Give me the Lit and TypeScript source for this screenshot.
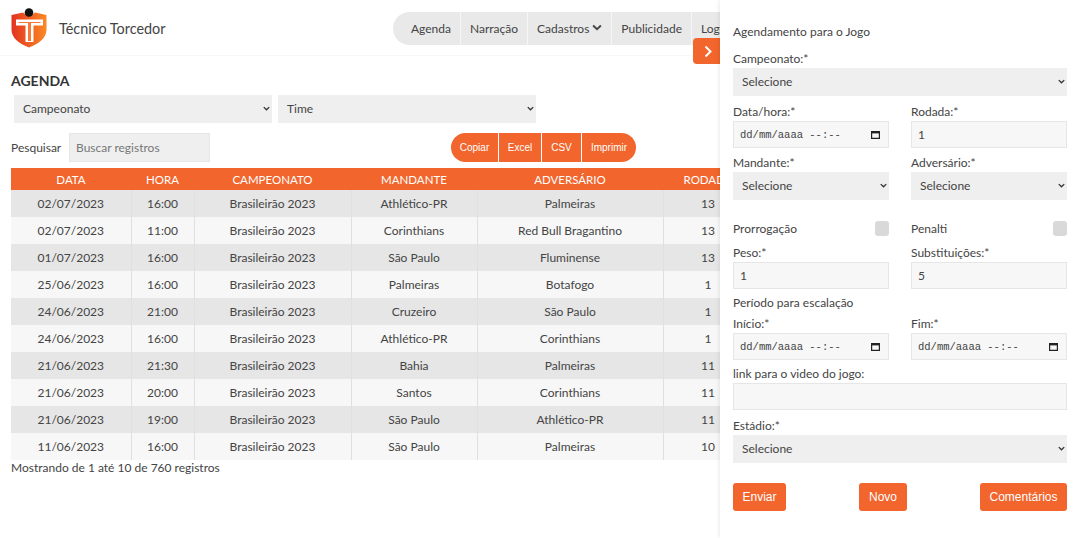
import { LitElement, css, html, svg } from 'lit';
import { customElement } from 'lit/decorators.js';

const ROWS = [
  ['02/07/2023', '16:00', 'Brasileirão 2023', 'Athlético-PR', 'Palmeiras', '13'],
  ['02/07/2023', '11:00', 'Brasileirão 2023', 'Corinthians', 'Red Bull Bragantino', '13'],
  ['01/07/2023', '16:00', 'Brasileirão 2023', 'São Paulo', 'Fluminense', '13'],
  ['25/06/2023', '16:00', 'Brasileirão 2023', 'Palmeiras', 'Botafogo', '1'],
  ['24/06/2023', '21:00', 'Brasileirão 2023', 'Cruzeiro', 'São Paulo', '1'],
  ['24/06/2023', '16:00', 'Brasileirão 2023', 'Athlético-PR', 'Corinthians', '1'],
  ['21/06/2023', '21:30', 'Brasileirão 2023', 'Bahia', 'Palmeiras', '11'],
  ['21/06/2023', '20:00', 'Brasileirão 2023', 'Santos', 'Corinthians', '11'],
  ['21/06/2023', '19:00', 'Brasileirão 2023', 'São Paulo', 'Athlético-PR', '11'],
  ['11/06/2023', '16:00', 'Brasileirão 2023', 'São Paulo', 'Palmeiras', '10'],
];

const chevron = svg`<path d="M1 1.2 4.5 4.6 8 1.2" fill="none" stroke="currentColor" stroke-width="1.7"/>`;

@customElement('app-root')
export class AppRoot extends LitElement {
  static styles = css`
    :host {
      display: block;
      position: relative;
      height: 538px;
      overflow: hidden;
      background: #fff;
      color: #444;
      font-family: Lato, sans-serif;
      font-size: 12px;
    }
    .header {
      display: flex;
      align-items: center;
      height: 56px;
      box-sizing: border-box;
      border-bottom: 1px solid #f7f7f7;
      padding: 0 360px 0 11px;
    }
    .logo { width: 36px; height: 48px; flex: none; align-self: flex-start; }
    .brand { margin: 2px 0 0 12px; font-size: 14.4px; color: #444; }
    .nav {
      display: flex;
      align-items: center;
      flex: none;
      width: 327px;
      margin: 1px 0 0 auto;
      height: 33px;
      padding-left: 9px;
      box-sizing: border-box;
      background: #e9e9e9;
      border-radius: 17px 0 0 17px;
      white-space: nowrap;
    }
    .nav span {
      display: flex;
      align-items: center;
      gap: 3px;
      height: 100%;
      padding: 0 9px;
      border-right: 1px solid #f6f6f6;
    }
    .nav span:last-child { border-right: 0; padding-right: 30px; }
    .nav svg { width: 10px; height: 7px; margin-top: -2px; }
    .content { padding: 16px 0 0 11px; }
    h1 { margin: 0; font-size: 14px; line-height: 18px; font-weight: 700; color: #333; }
    .filters { display: flex; gap: 6px; margin: 5px 0 0 3px; }
    .filters .select { width: 258px; }
    .select {
      position: relative;
      display: flex;
      align-items: center;
      height: 28px;
      box-sizing: border-box;
      padding: 0 0 2px 9px;
      background: #efefef;
      color: #444;
    }
    .select svg { position: absolute; right: 2px; top: 11px; width: 7px; height: 5px; color: #333; }
    .tools { display: flex; align-items: center; margin-top: 10px; height: 29px; }
    .tools > span { width: 51px; }
    .search {
      display: flex;
      align-items: center;
      width: 141px;
      height: 29px;
      box-sizing: border-box;
      margin-left: 7px;
      padding-left: 6px;
      background: #efefef;
      border: 1px solid #e6e6e6;
      color: #777;
    }
    .export { display: flex; height: 29px; margin-left: 241px; }
    .export span {
      display: flex;
      align-items: center;
      justify-content: center;
      background: #f2652c;
      color: #fff;
      font: 10px 'Liberation Sans', sans-serif;
      border-right: 1px solid #fff;
      box-sizing: border-box;
    }
    .export span:first-child { width: 48px; border-radius: 15px 0 0 15px; }
    .export span:nth-child(2) { width: 43px; }
    .export span:nth-child(3) { width: 40px; }
    .export span:last-child { width: 54px; border-right: 0; border-radius: 0 15px 15px 0; }
    table {
      table-layout: fixed;
      width: 742px;
      margin-top: 6px;
      border-collapse: collapse;
      text-align: center;
    }
    th {
      height: 22px;
      padding: 0;
      background: #f2652c;
      color: #fff;
      font-weight: 400;
      font-size: 11.5px;
    }
    td {
      height: 27px;
      padding: 0;
      border-right: 1px solid #e0e0e0;
      background: #f7f7f7;
    }
    tr:nth-child(odd) td { background: #e6e6e6; }
    .count { line-height: 15px; }
    .toggle {
      position: absolute;
      left: 693px;
      top: 38px;
      width: 30px;
      height: 26px;
      display: flex;
      align-items: center;
      padding-left: 11px;
      box-sizing: border-box;
      background: #f2652c;
      border-radius: 4px 0 0 4px;
    }
    .toggle svg { width: 9px; height: 13px; }
    .panel {
      position: absolute;
      left: 720px;
      top: 0;
      bottom: 0;
      width: 360px;
      box-sizing: border-box;
      padding: 23px 13px 0;
      background: #fff;
      box-shadow: 0 0 5px rgba(0, 0, 0, 0.12);
      display: flex;
      flex-direction: column;
    }
    .line { line-height: 18px; }
    .title { margin-bottom: 9px; }
    .row { display: grid; grid-template-columns: 156px 156px; column-gap: 22px; }
    .input {
      display: flex;
      align-items: center;
      height: 27px;
      box-sizing: border-box;
      padding-left: 6px;
      background: #f7f7f7;
      border: 1px solid #e6e6e6;
      color: #444;
    }
    .date {
      justify-content: space-between;
      padding: 0 8px 0 6px;
      font: 10.5px 'Liberation Mono', monospace;
    }
    .date svg { width: 9px; height: 9px; }
    .mt3 { margin-top: 3px; }
    .mt5 { margin-top: 5px; }
    .mt6 { margin-top: 6px; }
    .mt7 { margin-top: 7px; }
    .check-row { margin-top: 21px; margin-bottom: 8px; }
    .check { display: flex; align-items: center; justify-content: space-between; height: 15px; }
    .box { width: 14px; height: 15px; background: #d9d9d9; border-radius: 3px; }
    .actions { display: flex; justify-content: space-between; margin-top: 20px; }
    .actions span {
      display: flex;
      align-items: center;
      justify-content: center;
      height: 28px;
      background: #f2652c;
      color: #fff;
      font: 12px 'Liberation Sans', sans-serif;
      border-radius: 3px;
    }
    .enviar { width: 53px; }
    .novo { width: 48px; }
    .comentarios { width: 87px; }
  `;

  private select(text: string) {
    return html`<div class="select">${text}<svg viewBox="0 0 9 6">${chevron}</svg></div>`;
  }

  private date() {
    return html`<div class="input date">
      <span>dd/mm/aaaa --:--</span>
      <svg viewBox="0 0 9 9"><path d="M.6 1.600h7.800v6.800H.6z" fill="none" stroke="#222" stroke-width="1.200"/><path d="M.6 1.600h7.800v1.800H.6z" fill="#222"/></svg>
    </div>`;
  }

  render() {
    return html`
      <div class="header">
        <svg class="logo" viewBox="0 0 36 48">
          <defs>
            <linearGradient id="shield" x1="0" x2="1" y1="0" y2="0">
              <stop offset="0" stop-color="#e2331f" />
              <stop offset="1" stop-color="#fb8a25" />
            </linearGradient>
          </defs>
          <path d="M0.500 15 12 12.500Q18 19 24 12.500L35.500 15V30Q35 41 18 47.500 1 41 0.500 30Z" fill="url(#shield)" />
          <path d="M5 19.500H32V25.500H22.500V42H14.500V25.500H5Z" fill="#fff" />
          <path d="M7.500 22H29.500V23H20V41H17V23H7.500Z" fill="#f77a3a" />
          <circle cx="18" cy="12.500" r="4.300" fill="#111" />
        </svg>
        <div class="brand">Técnico Torcedor</div>
        <div class="nav">
          <span>Agenda</span>
          <span>Narração</span>
          <span>Cadastros<svg viewBox="0 0 9 6">${chevron}</svg></span>
          <span>Publicidade</span>
          <span>Logout</span>
        </div>
      </div>
      <div class="content">
        <h1>AGENDA</h1>
        <div class="filters">${this.select('Campeonato')}${this.select('Time')}</div>
        <div class="tools">
          <span>Pesquisar</span>
          <div class="search">Buscar registros</div>
          <div class="export"><span>Copiar</span><span>Excel</span><span>CSV</span><span>Imprimir</span></div>
        </div>
        <table>
          <colgroup>
            <col style="width:120px" /><col style="width:63px" /><col style="width:157px" />
            <col style="width:126px" /><col style="width:186px" /><col style="width:90px" />
          </colgroup>
          <thead>
            <tr><th>DATA</th><th>HORA</th><th>CAMPEONATO</th><th>MANDANTE</th><th>ADVERSÁRIO</th><th>RODADA</th></tr>
          </thead>
          <tbody>
            ${ROWS.map((r) => html`<tr>${r.map((c) => html`<td>${c}</td>`)}</tr>`)}
          </tbody>
        </table>
        <div class="count">Mostrando de 1 até 10 de 760 registros</div>
      </div>
      <div class="toggle">
        <svg viewBox="0 0 9 13"><path d="M1.500 1.500 6.500 6.500 1.500 11.500" fill="none" stroke="#fff" stroke-width="2" /></svg>
      </div>
      <aside class="panel">
        <div class="line title">Agendamento para o Jogo</div>
        <div class="line">Campeonato:*</div>
        ${this.select('Selecione')}
        <div class="row mt7">
          <div><div class="line">Data/hora:*</div>${this.date()}</div>
          <div><div class="line">Rodada:*</div><div class="input">1</div></div>
        </div>
        <div class="row mt6">
          <div><div class="line">Mandante:*</div>${this.select('Selecione')}</div>
          <div><div class="line">Adversário:*</div>${this.select('Selecione')}</div>
        </div>
        <div class="row check-row">
          <div class="check">Prorrogação<div class="box"></div></div>
          <div class="check">Penalti<div class="box"></div></div>
        </div>
        <div class="row">
          <div><div class="line">Peso:*</div><div class="input">1</div></div>
          <div><div class="line">Substituições:*</div><div class="input">5</div></div>
        </div>
        <div class="line mt5">Período para escalação</div>
        <div class="row mt3">
          <div><div class="line">Início:*</div>${this.date()}</div>
          <div><div class="line">Fim:*</div>${this.date()}</div>
        </div>
        <div class="line mt5">link para o video do jogo:</div>
        <div class="input"></div>
        <div class="line mt7">Estádio:*</div>
        ${this.select('Selecione')}
        <div class="actions">
          <span class="enviar">Enviar</span><span class="novo">Novo</span><span class="comentarios">Comentários</span>
        </div>
      </aside>
    `;
  }
}
